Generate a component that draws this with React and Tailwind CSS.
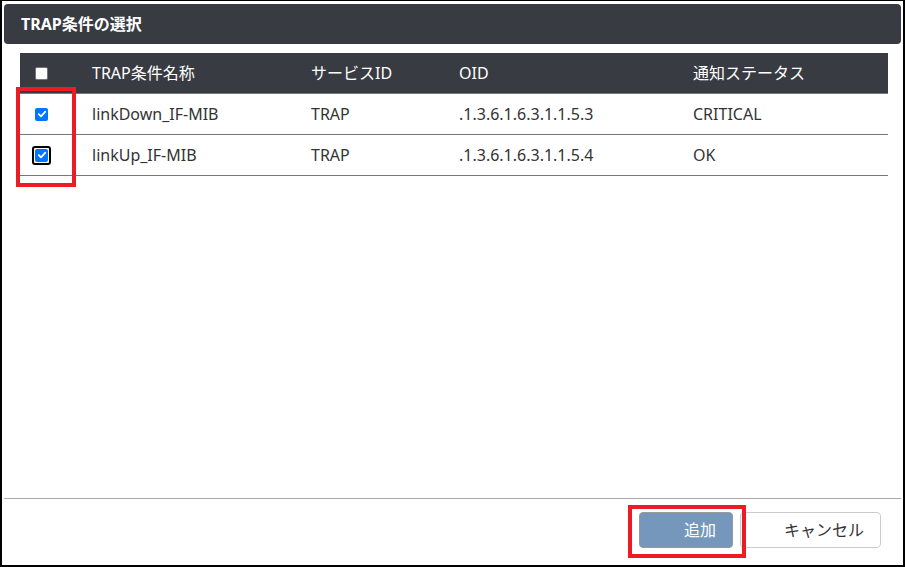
import React from "react";

const font = { fontFamily: '"Noto Sans", "Noto Sans CJK JP", sans-serif' };

function Check({ checked, focused }) {
  const box = checked ? (
    <span className="flex h-[13px] w-[13px] items-center justify-center rounded-[2px] bg-[#0075ff]">
      <svg width="10" height="10" viewBox="0 0 10 10">
        <path d="M1.8 5.2 L4 7.3 L8.3 2.6" fill="none" stroke="white" strokeWidth="1.8" strokeLinecap="round" strokeLinejoin="round" />
      </svg>
    </span>
  ) : (
    <span className="block h-[13px] w-[13px] rounded-[2px] border border-[#767676] bg-white" />
  );
  if (focused) {
    return (
      <span className="flex h-[19px] w-[19px] items-center justify-center rounded-[3px] border-2 border-black bg-white">
        {box}
      </span>
    );
  }
  return box;
}

const rows = [
  { name: "linkDown_IF-MIB", svc: "TRAP", oid: ".1.3.6.1.6.3.1.1.5.3", st: "CRITICAL", focused: false },
  { name: "linkUp_IF-MIB", svc: "TRAP", oid: ".1.3.6.1.6.3.1.1.5.4", st: "OK", focused: true },
];

const grid = "grid grid-cols-[72px_219px_148px_234px_1fr] items-center";

export default function App() {
  return (
    <div style={font} className="relative flex h-[567px] w-[905px] flex-col border-x-2 border-t border-b-2 border-black bg-white text-[16px]">
      <div className="mx-[2px] mt-[3px] flex h-[40px] items-center rounded-[4px] bg-[#383b42] pl-[17px]">
        <span className="font-bold text-white">TRAP条件の選択</span>
      </div>
      <div className="flex-1">
        <div className="ml-[18px] mt-[9px] w-[868px]">
          <div className={`${grid} h-[41px] border-b border-[#777] bg-[#383b42] text-white`}>
            <div className="pl-[15px]">
              <Check checked={false} />
            </div>
            <div>TRAP条件名称</div>
            <div>サービスID</div>
            <div>OID</div>
            <div>通知ステータス</div>
          </div>
          {rows.map((r) => (
            <div key={r.name} className={`${grid} h-[41px] border-b border-[#777] text-[#333]`}>
              <div className={r.focused ? "pl-[12px]" : "pl-[15px]"}>
                <Check checked focused={r.focused} />
              </div>
              <div>{r.name}</div>
              <div>{r.svc}</div>
              <div>{r.oid}</div>
              <div>{r.st}</div>
            </div>
          ))}
        </div>
      </div>
      <div className="mx-[2px] flex h-[67px] justify-end gap-[7px] border-t border-[#aaa] pr-[20px] pt-[13px]">
        <button className="h-[36px] w-[94px] rounded-[4px] border border-[#999] bg-[#7597bc] pl-[44px] text-left text-white">
          追加
        </button>
        <button className="h-[36px] w-[141px] rounded-[4px] border border-[#ccc] bg-white pl-[43px] text-left text-[#333]">
          キャンセル
        </button>
      </div>
      <div className="pointer-events-none absolute left-[14px] top-[86px] h-[100px] w-[60px] border-4 border-[#ec1c24]" />
      <div className="pointer-events-none absolute left-[626px] top-[504px] h-[53px] w-[118px] border-4 border-[#ec1c24]" />
    </div>
  );
}
